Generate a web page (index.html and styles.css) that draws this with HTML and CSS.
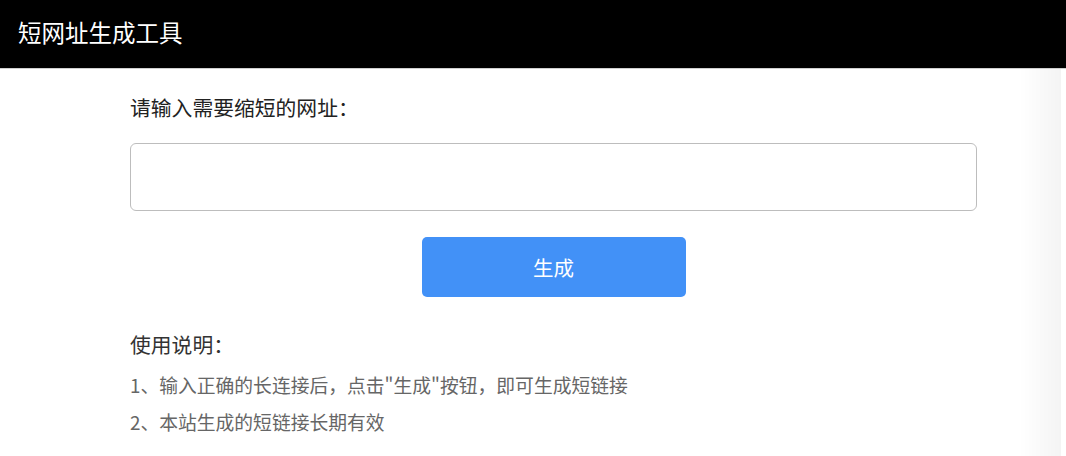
FILE: index.html
```html
<!DOCTYPE html>
<html lang="zh-CN">
<head>
<meta charset="utf-8">
<title>短网址生成工具</title>
<link rel="stylesheet" href="styles.css">
</head>
<body>
<header class="topbar">
  <h1 class="title">短网址生成工具</h1>
</header>
<main class="main">
  <label class="label" for="url">请输入需要缩短的网址：</label>
  <input class="url-input" id="url" type="text">
  <div class="actions">
    <button class="btn" type="button">生成</button>
  </div>
  <h2 class="help-title">使用说明：</h2>
  <ol class="help-list">
    <li>1、输入正确的长连接后，点击"生成"按钮，即可生成短链接</li>
    <li>2、本站生成的短链接长期有效</li>
  </ol>
</main>
<div class="edge-shade"></div>
</body>
</html>
```
FILE: styles.css
```css
html, body {
  margin: 0;
  padding: 0;
  background: #fff;
  font-family: "Noto Sans CJK SC", "Noto Sans", sans-serif;
  color: #333;
}

.topbar {
  height: 68px;
  background: #000;
  border-bottom: 1px solid #cfcfcf;
  display: flex;
  align-items: center;
  padding-left: 18px;
}

.title {
  margin: 0;
  font-size: 23.5px;
  font-weight: 400;
  color: #fff;
  line-height: 1;
  position: relative;
  top: -1px;
}

.main {
  width: 847px;
  margin-left: 130px;
  display: flex;
  flex-direction: column;
  padding-top: 24px;
}

.label {
  font-size: 20.8px;
  line-height: 28px;
  color: #222;
}

.url-input {
  box-sizing: border-box;
  margin-top: 22px;
  height: 68px;
  width: 847px;
  border: 1.5px solid #bdbdbd;
  border-radius: 6px;
  outline: none;
  background: #fff;
}

.actions {
  display: flex;
  justify-content: center;
  margin-top: 26px;
}

.btn {
  width: 264px;
  height: 60px;
  border: none;
  border-radius: 5px;
  background: #4291f7;
  color: #fff;
  font-family: inherit;
  font-size: 20.5px;
  cursor: pointer;
}

.help-title {
  margin: 33px 0 0;
  font-size: 20.8px;
  font-weight: 400;
  line-height: 28px;
  color: #333;
}

.help-list {
  list-style: none;
  margin: 9px 0 0;
  padding: 0;
  font-size: 18.8px;
  line-height: 36.5px;
  color: #666;
}

.edge-shade {
  position: fixed;
  top: 69px;
  bottom: 0;
  right: 5px;
  width: 42px;
  background: linear-gradient(to right, rgba(0,0,0,0), rgba(0,0,0,0.045));
  pointer-events: none;
}
```
